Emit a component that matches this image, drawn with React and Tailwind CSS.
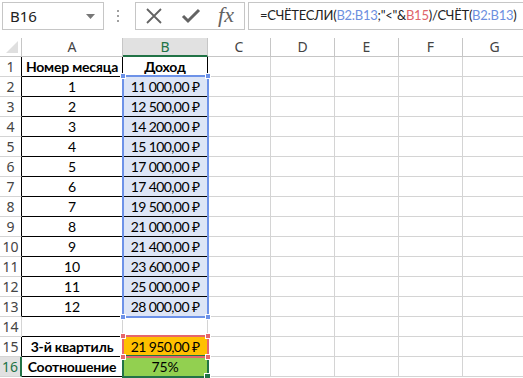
import React from 'react';

const incomes = [
  '11 000,00 ₽', '12 500,00 ₽', '14 200,00 ₽', '15 100,00 ₽', '17 000,00 ₽', '17 400,00 ₽',
  '19 500,00 ₽', '21 000,00 ₽', '21 400,00 ₽', '23 600,00 ₽', '25 000,00 ₽', '28 000,00 ₽',
];

const cols = ['A', 'B', 'C', 'D', 'E', 'F', 'G'];

function rowData(r) {
  if (r === 1) return { a: 'Номер месяца', b: 'Доход', bold: true, boxed: true };
  if (r <= 13) return { a: String(r - 1), b: incomes[r - 2], num: true, boxed: true, fill: 'bg-[#dde5f6]' };
  if (r === 14) return { a: '', b: '', boxed: false };
  if (r === 15) return { a: '3-й квартиль', b: '21 950,00 ₽', num: true, boldA: true, boxed: true, fill: 'bg-[#ffc000]' };
  return { a: 'Соотношение', b: '75%', boldA: true, boxed: true, fill: 'bg-[#92d050]' };
}

function Corner({ className, color }) {
  return <div className={`absolute w-[6px] h-[6px] border border-white ${color} ${className}`} />;
}

function FormulaBar() {
  return (
    <div className="h-[38px] flex items-start pt-[2px] bg-white">
      <div className="ml-[2px] w-[102px] h-[28px] border border-[#c6c6c6] flex items-center justify-between pl-[7px] pr-[8px]">
        <span className="text-[15px] text-[#222]">B16</span>
        <svg width="9" height="5" viewBox="0 0 9 5"><path d="M0 0h9L4.5 5z" fill="#777" /></svg>
      </div>
      <div className="w-[28px] h-[28px] flex flex-col items-center justify-center gap-[3px]">
        <span className="w-[2px] h-[2px] bg-[#a0a0a0]" />
        <span className="w-[2px] h-[2px] bg-[#a0a0a0]" />
        <span className="w-[2px] h-[2px] bg-[#a0a0a0]" />
      </div>
      <div className="ml-[3px] w-[110px] h-[28px] border border-[#c6c6c6] flex items-center justify-between pl-[9px] pr-[10px]">
        <svg width="18" height="18" viewBox="0 0 18 18"><path d="M2 2L16 16M16 2L2 16" stroke="#636363" strokeWidth="1.8" /></svg>
        <svg width="20" height="18" viewBox="0 0 20 18"><path d="M2 9l5 5L18 3" stroke="#636363" strokeWidth="3" fill="none" /></svg>
        <span className="font-['Liberation_Serif',serif] italic text-[22px] leading-none text-[#636363] -mt-[2px]">fx</span>
      </div>
      <div className="ml-[3px] flex-1 h-[28px] border border-r-0 border-[#c6c6c6] flex items-center pl-[11px] whitespace-nowrap overflow-hidden font-['Lato',sans-serif] text-[13px] tracking-[-0.25px] text-[#222]">
        =СЧЁТЕСЛИ(<span className="text-[#6d8fe0]">B2:B13</span>;"&lt;"&amp;<span className="text-[#e0636a]">B15</span>)/СЧЁТ(<span className="text-[#6d8fe0]">B2:B13</span>)
      </div>
    </div>
  );
}

export default function App() {
  const rows = Array.from({ length: 16 }, (_, i) => i + 1);
  return (
    <div className="w-[523px] h-[378px] overflow-hidden bg-white font-['Noto_Sans',sans-serif] relative">
      <FormulaBar />
      <div className="grid grid-cols-[22px_101px_85px_63px_64px_64px_64px_64px] font-['Lato',sans-serif] text-[14px] tracking-[-0.2px] text-black">
        {/* Header row */}
        <div className="h-[19px] border-r border-b border-[#c6c6c6] relative bg-white">
          <svg className="absolute right-[3px] bottom-[3px]" width="12" height="12" viewBox="0 0 12 12"><path d="M12 0V12H0z" fill="#dfdfdf" /></svg>
        </div>
        {cols.map((c) => (
          <div
            key={c}
            className={
              c === 'B'
                ? 'h-[19px] border-r border-[#c6c6c6] border-b-2 border-b-[#217346] bg-[#e1e1e1] text-[#217346] flex items-center justify-center leading-none tracking-normal font-["Noto_Sans",sans-serif] text-[14px]'
                : 'h-[19px] border-r border-b border-[#c6c6c6] bg-white text-[#444] flex items-center justify-center leading-none tracking-normal font-["Noto_Sans",sans-serif] text-[14px]'
            }
          >
            {c}
          </div>
        ))}
        {rows.map((r) => {
          const d = rowData(r);
          const active = r === 16;
          const edge = d.boxed || r === 14 ? 'border-b-black' : 'border-b-[#d4d4d4]';
          return (
            <React.Fragment key={r}>
              <div
                className={
                  (active
                    ? 'bg-[#e1e1e1] text-[#217346] border-r-2 border-r-[#217346] '
                    : d.boxed
                    ? 'bg-white text-[#444] border-r border-r-black '
                    : 'bg-white text-[#444] border-r border-r-[#d4d4d4] ') +
                  'h-[20px] border-b border-b-[#d4d4d4] flex items-center justify-center tracking-normal font-["Noto_Sans",sans-serif] text-[14px] leading-none'
                }
              >
                {r}
              </div>
              <div
                className={`h-[20px] border-b ${edge} border-r ${d.boxed ? 'border-r-black' : 'border-r-[#d4d4d4]'} flex items-center justify-center whitespace-nowrap leading-none ${d.bold || d.boldA ? 'font-bold' : ''}`}
              >
                {d.a}
              </div>
              <div
                className={`h-[20px] border-b ${edge} border-r ${d.boxed ? 'border-r-black' : 'border-r-[#d4d4d4]'} flex items-center justify-center whitespace-nowrap leading-none ${d.fill || ''} ${d.bold ? 'font-bold' : ''} ${d.num ? 'tracking-[-0.6px]' : ''}`}
              >
                {d.b}
              </div>
              {['C', 'D', 'E', 'F', 'G'].map((c) => (
                <div key={c} className="h-[20px] border-b border-r border-[#d4d4d4]" />
              ))}
            </React.Fragment>
          );
        })}
      </div>

      {/* Range highlight B2:B13 */}
      <div className="absolute left-[122px] top-[75px] w-[87px] h-[243px] border-2 border-[#6d92e8] pointer-events-none">
        <Corner color="bg-[#6d92e8]" className="-left-[4px] -top-[4px]" />
        <Corner color="bg-[#6d92e8]" className="-right-[4px] -top-[4px]" />
        <Corner color="bg-[#6d92e8]" className="-left-[4px] -bottom-[4px]" />
        <Corner color="bg-[#6d92e8]" className="-right-[4px] -bottom-[4px]" />
      </div>
      {/* Active cell B16 */}
      <div className="absolute left-[122px] top-[355px] w-[87px] h-[23px] border-2 border-[#217346] pointer-events-none">
        <div className="absolute -right-[4px] -bottom-[4px] w-[7px] h-[7px] bg-[#217346] border border-white" />
      </div>
      {/* Range highlight B15 */}
      <div className="absolute left-[122px] top-[335px] w-[87px] h-[23px] border-2 border-[#e6666b] pointer-events-none">
        <Corner color="bg-[#e6666b]" className="-left-[4px] -top-[4px]" />
        <Corner color="bg-[#e6666b]" className="-right-[4px] -top-[4px]" />
        <Corner color="bg-[#e6666b]" className="-left-[4px] -bottom-[4px]" />
        <Corner color="bg-[#e6666b]" className="-right-[4px] -bottom-[4px]" />
      </div>
    </div>
  );
}
